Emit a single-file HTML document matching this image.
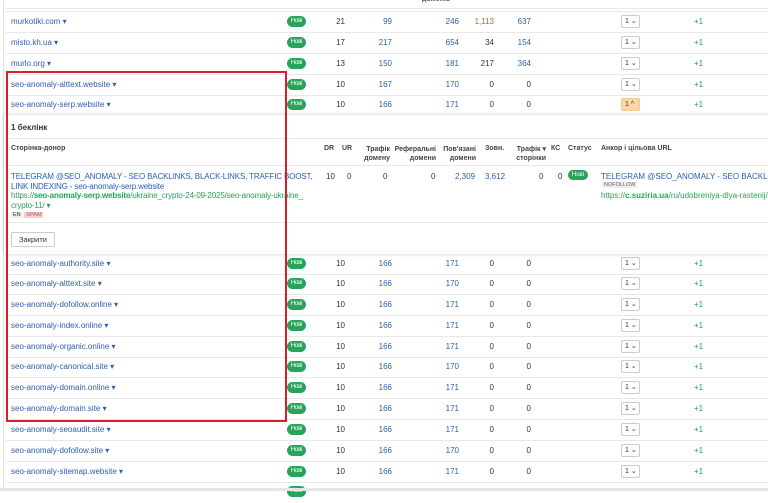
<!DOCTYPE html><html><head><meta charset="utf-8"><style>
body{margin:0;width:768px;height:491px;overflow:hidden;background:#fff;font-family:"Liberation Sans",sans-serif;font-size:8px;color:#333;position:relative}
.a{position:absolute;white-space:nowrap}
.row{position:absolute;left:6px;right:0;height:21px;border-bottom:1px solid #e8e8e8}
.dom{position:absolute;left:5px;top:6px;color:#2a5fb0;font-size:8px}
.b{position:absolute;left:281px;top:5px;width:19px;height:11px;border-radius:6px;background:#27a35a;color:#fff;font-size:6px;line-height:11px;text-align:center;letter-spacing:-.2px}
.n{position:absolute;top:6px;text-align:right;width:40px}
.bl{color:#2a5fb0}
.sel{position:absolute;left:615px;top:4px;width:19px;border:1px solid #ccc;border-radius:2px;font-size:7px;line-height:11px;padding-left:3px;box-sizing:border-box;height:13px}
.p{position:absolute;left:688px;top:6px;color:#27a35a}
</style></head><body>
<div class="a" style="left:3px;top:0;width:1px;height:491px;background:#e2e2e2"></div>
<div class="a" style="left:6px;right:0;top:8px;height:1px;background:#e8e8e8"></div>
<div class="a" style="left:6px;right:0;top:11px;height:1px;background:#e8e8e8"></div>
<div class="a" style="left:422px;top:-4px;font-size:7px;color:#555;font-weight:bold">доменів</div>

<div class="row" style="top:11px"><span class="dom">murkotiki.com ▾</span><span class="b">Нові</span><span class="n" style="left:299px">21</span><span class="n bl" style="left:346px">99</span><span class="n bl" style="left:413px">246</span><span class="n" style="left:448px;color:#a0702a">1,113</span><span class="n bl" style="left:485px">637</span><span class="sel">1 ⌄</span><span class="p">+1</span></div>
<div class="row" style="top:32px"><span class="dom">misto.kh.ua ▾</span><span class="b">Нові</span><span class="n" style="left:299px">17</span><span class="n bl" style="left:346px">217</span><span class="n bl" style="left:413px">654</span><span class="n" style="left:448px">34</span><span class="n bl" style="left:485px">154</span><span class="sel">1 ⌄</span><span class="p">+1</span></div>
<div class="row" style="top:53px"><span class="dom">murlo.org ▾</span><span class="b">Нові</span><span class="n" style="left:299px">13</span><span class="n bl" style="left:346px">150</span><span class="n bl" style="left:413px">181</span><span class="n" style="left:448px">217</span><span class="n bl" style="left:485px">364</span><span class="sel">1 ⌄</span><span class="p">+1</span></div>
<div class="row" style="top:74px"><span class="dom">seo-anomaly-alttext.website ▾</span><span class="b">Нові</span><span class="n" style="left:299px">10</span><span class="n bl" style="left:346px">167</span><span class="n bl" style="left:413px">170</span><span class="n" style="left:448px">0</span><span class="n" style="left:485px">0</span><span class="sel">1 ⌄</span><span class="p">+1</span></div>
<div class="row" style="top:94px;border:none"><span class="dom">seo-anomaly-serp.website ▾</span><span class="b">Нові</span><span class="n" style="left:299px">10</span><span class="n bl" style="left:346px">166</span><span class="n bl" style="left:413px">171</span><span class="n" style="left:448px">0</span><span class="n" style="left:485px">0</span><span class="sel" style="background:#fbd7a5;border-color:#f5c98e">1 ^</span><span class="p">+1</span></div>

<div class="a" style="left:4px;right:0;top:115px;height:139px;background:#fff;box-shadow:0 0 4px rgba(0,0,0,.2)">
<div class="a" style="left:7px;top:8px;font-weight:bold">1 беклінк</div>
<div class="a" style="left:0;right:0;top:23px;height:1px;background:#e8e8e8"></div>
<div class="a" style="left:7px;top:30px;font-weight:bold;font-size:7px;color:#444">Сторінка-донор</div>
<div class="a" style="left:0;right:0;top:50px;height:1px;background:#e8e8e8"></div>
<div class="a" style="font-weight:bold;font-size:7px;color:#444;left:0;top:30px;width:764px;height:20px">
<span class="a" style="left:320px">DR</span><span class="a" style="left:338px">UR</span>
<span class="a" style="left:350px;width:36px;text-align:right;white-space:normal;line-height:9px">Трафік домену</span>
<span class="a" style="left:386px;width:46px;text-align:right;white-space:normal;line-height:9px">Реферальні домени</span>
<span class="a" style="left:436px;width:36px;text-align:right;white-space:normal;line-height:9px">Пов'язані домени</span>
<span class="a" style="left:481px">Зовн.</span>
<span class="a" style="left:496px;width:46px;text-align:right;white-space:normal;line-height:9px">Трафік ▾ сторінки</span>
<span class="a" style="left:547px">КС</span><span class="a" style="left:564px">Статус</span><span class="a" style="left:597px">Анкор і цільова URL</span></div>
<div class="a" style="left:7px;top:57px;width:312px;white-space:normal;line-height:9.5px;color:#2a5fb0;font-size:8px;letter-spacing:-0.15px">TELEGRAM @SEO_ANOMALY - SEO BACKLINKS, BLACK-LINKS, TRAFFIC BOOST, LINK INDEXING - seo-anomaly-serp.website<br><span style="color:#27a35a">https://<b>seo-anomaly-serp.website</b>/ukraine_crypto-24-09-2025/seo-anomaly-ukraine_ crypto-11/ ▾</span></div>
<div class="a" style="left:7px;top:97px;font-size:5.5px"><span style="background:#eee;padding:0 2px">EN</span> <span style="background:#f6d0d0;color:#b55;padding:0 2px">SPAM</span></div>
<div class="a" style="left:322px;top:57px">10</div><div class="a" style="left:343px;top:57px">0</div>
<div class="a" style="left:379px;top:57px">0</div><div class="a" style="left:427px;top:57px">0</div>
<div class="a bl" style="left:451px;top:57px">2,309</div><div class="a bl" style="left:481px;top:57px">3,612</div>
<div class="a" style="left:535px;top:57px">0</div><div class="a" style="left:554px;top:57px">0</div>
<div class="a" style="left:564px;top:55px;width:20px;height:10px;border-radius:6px;background:#27a35a;color:#fff;font-size:6px;line-height:10px;text-align:center">Нові</div>
<div class="a" style="left:597px;top:57px;color:#2a5fb0;font-size:8px">TELEGRAM @SEO_ANOMALY - SEO BACKLINKS</div>
<div class="a" style="left:598px;top:67px;font-size:5.5px;background:#eee;color:#666;padding:0 2px">NOFOLLOW</div>
<div class="a" style="left:597px;top:76px;color:#27a35a;font-size:8px">https://<b>c.suziria.ua</b>/ru/udobreniya-dlya-rastenij/</div>
<div class="a" style="left:0;right:0;top:107px;height:1px;background:#e8e8e8"></div>
<div class="a" style="left:7px;top:117px;width:42px;height:13px;border:1px solid #ccc;border-radius:2px;text-align:center;line-height:13px;font-size:7.5px">Закрити</div>
</div>

<div class="row" style="top:253px"><span class="dom">seo-anomaly-authority.site ▾</span><span class="b">Нові</span><span class="n" style="left:299px">10</span><span class="n bl" style="left:346px">166</span><span class="n bl" style="left:413px">171</span><span class="n" style="left:448px">0</span><span class="n" style="left:485px">0</span><span class="sel">1 ⌄</span><span class="p">+1</span></div>
<div class="row" style="top:273px"><span class="dom">seo-anomaly-alttext.site ▾</span><span class="b">Нові</span><span class="n" style="left:299px">10</span><span class="n bl" style="left:346px">166</span><span class="n bl" style="left:413px">170</span><span class="n" style="left:448px">0</span><span class="n" style="left:485px">0</span><span class="sel">1 ⌄</span><span class="p">+1</span></div>
<div class="row" style="top:294px"><span class="dom">seo-anomaly-dofollow.online ▾</span><span class="b">Нові</span><span class="n" style="left:299px">10</span><span class="n bl" style="left:346px">166</span><span class="n bl" style="left:413px">171</span><span class="n" style="left:448px">0</span><span class="n" style="left:485px">0</span><span class="sel">1 ⌄</span><span class="p">+1</span></div>
<div class="row" style="top:315px"><span class="dom">seo-anomaly-index.online ▾</span><span class="b">Нові</span><span class="n" style="left:299px">10</span><span class="n bl" style="left:346px">166</span><span class="n bl" style="left:413px">171</span><span class="n" style="left:448px">0</span><span class="n" style="left:485px">0</span><span class="sel">1 ⌄</span><span class="p">+1</span></div>
<div class="row" style="top:336px"><span class="dom">seo-anomaly-organic.online ▾</span><span class="b">Нові</span><span class="n" style="left:299px">10</span><span class="n bl" style="left:346px">166</span><span class="n bl" style="left:413px">171</span><span class="n" style="left:448px">0</span><span class="n" style="left:485px">0</span><span class="sel">1 ⌄</span><span class="p">+1</span></div>
<div class="row" style="top:356px"><span class="dom">seo-anomaly-canonical.site ▾</span><span class="b">Нові</span><span class="n" style="left:299px">10</span><span class="n bl" style="left:346px">166</span><span class="n bl" style="left:413px">170</span><span class="n" style="left:448px">0</span><span class="n" style="left:485px">0</span><span class="sel">1 ⌄</span><span class="p">+1</span></div>
<div class="row" style="top:377px"><span class="dom">seo-anomaly-domain.online ▾</span><span class="b">Нові</span><span class="n" style="left:299px">10</span><span class="n bl" style="left:346px">166</span><span class="n bl" style="left:413px">171</span><span class="n" style="left:448px">0</span><span class="n" style="left:485px">0</span><span class="sel">1 ⌄</span><span class="p">+1</span></div>
<div class="row" style="top:398px"><span class="dom">seo-anomaly-domain.site ▾</span><span class="b">Нові</span><span class="n" style="left:299px">10</span><span class="n bl" style="left:346px">166</span><span class="n bl" style="left:413px">171</span><span class="n" style="left:448px">0</span><span class="n" style="left:485px">0</span><span class="sel">1 ⌄</span><span class="p">+1</span></div>
<div class="row" style="top:419px"><span class="dom">seo-anomaly-seoaudit.site ▾</span><span class="b">Нові</span><span class="n" style="left:299px">10</span><span class="n bl" style="left:346px">166</span><span class="n bl" style="left:413px">171</span><span class="n" style="left:448px">0</span><span class="n" style="left:485px">0</span><span class="sel">1 ⌄</span><span class="p">+1</span></div>
<div class="row" style="top:440px"><span class="dom">seo-anomaly-dofollow.site ▾</span><span class="b">Нові</span><span class="n" style="left:299px">10</span><span class="n bl" style="left:346px">166</span><span class="n bl" style="left:413px">170</span><span class="n" style="left:448px">0</span><span class="n" style="left:485px">0</span><span class="sel">1 ⌄</span><span class="p">+1</span></div>
<div class="row" style="top:461px"><span class="dom">seo-anomaly-sitemap.website ▾</span><span class="b">Нові</span><span class="n" style="left:299px">10</span><span class="n bl" style="left:346px">166</span><span class="n bl" style="left:413px">171</span><span class="n" style="left:448px">0</span><span class="n" style="left:485px">0</span><span class="sel">1 ⌄</span><span class="p">+1</span></div>
<div class="row" style="top:482px;border:none"><span class="b" style="top:4px">Нові</span></div>
<div class="a" style="left:0;right:0;top:488px;height:3px;background:#e6e6e6"></div>

<div class="a" style="left:6px;top:71px;width:277px;height:347px;border:2px solid #d9202a"></div>
</body></html>
